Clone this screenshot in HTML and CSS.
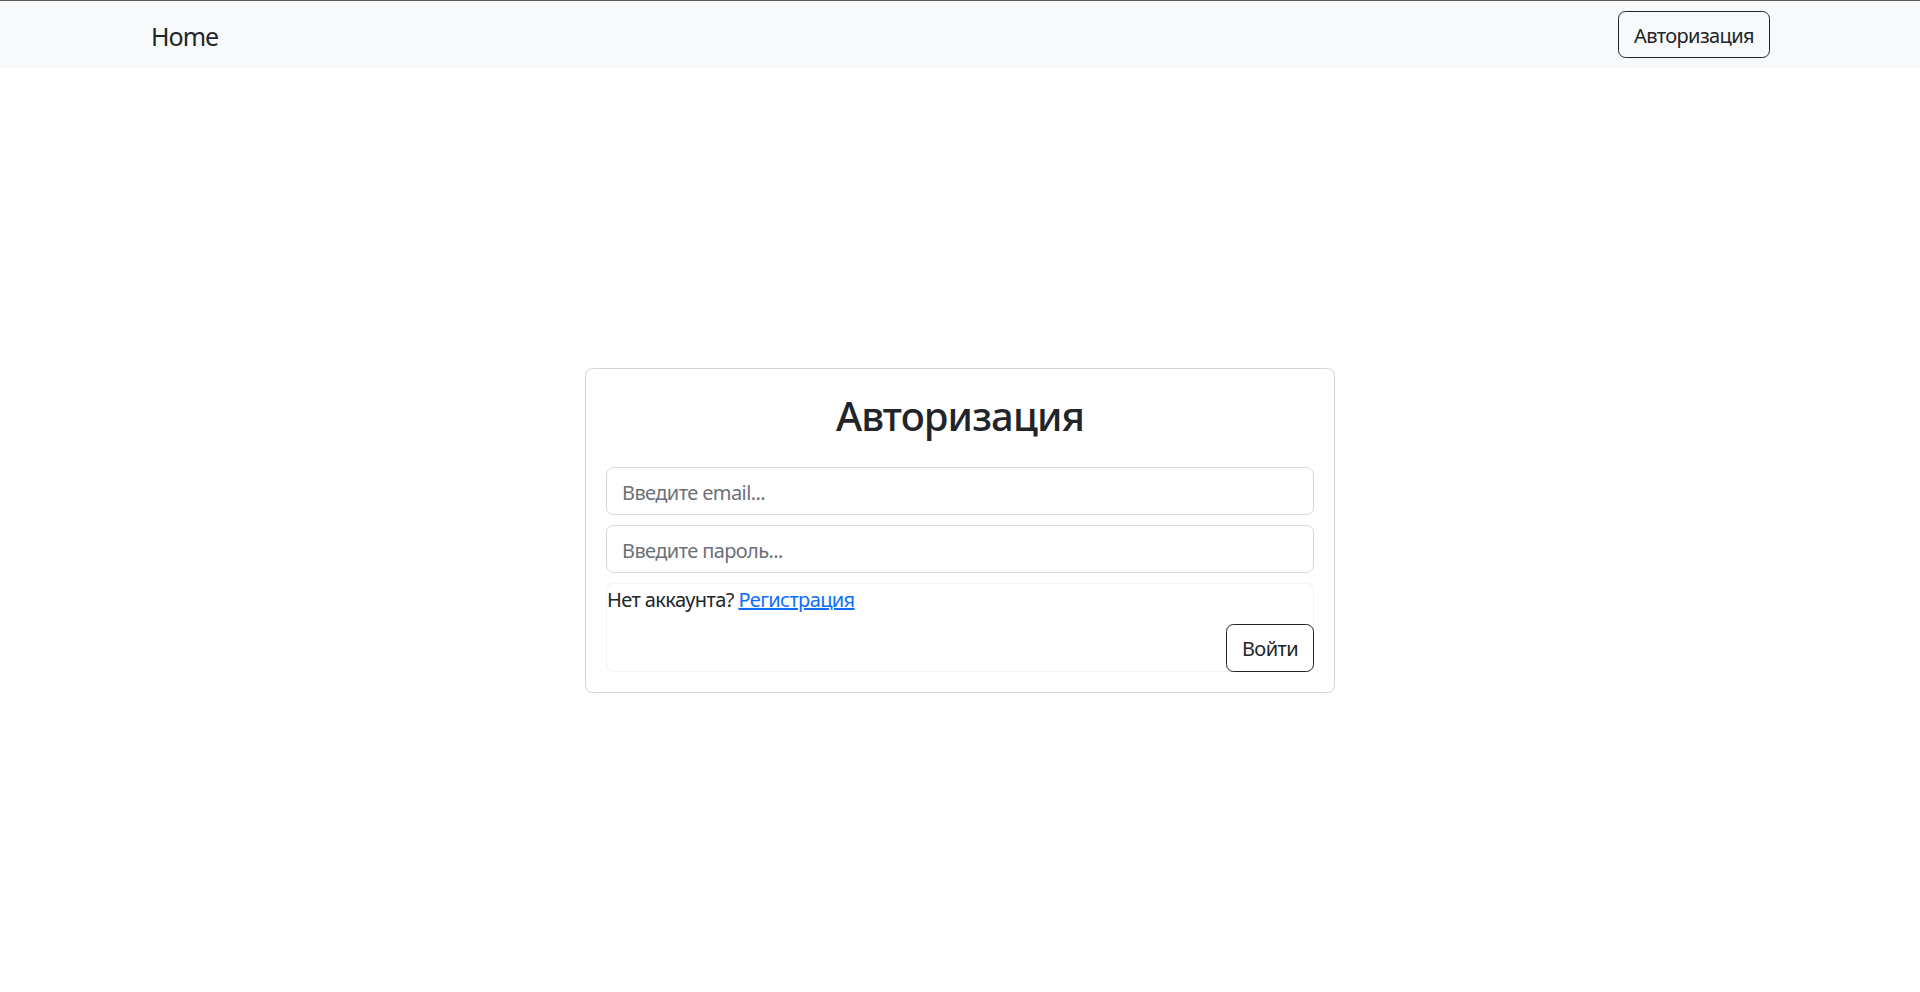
FILE: index.html
```html
<!DOCTYPE html>
<html lang="ru">
<head>
<meta charset="utf-8">
<title>Авторизация</title>
<link rel="stylesheet" href="styles.css">
</head>
<body>
<nav class="navbar">
  <div class="nav-container">
    <a class="brand" href="#">Home</a>
    <button class="btn btn-outline">Авторизация</button>
  </div>
</nav>
<main class="page">
  <div class="card">
    <h2 class="card-title">Авторизация</h2>
    <form class="form">
      <input class="form-control first" type="email" placeholder="Введите email...">
      <input class="form-control" type="password" placeholder="Введите пароль...">
      <div class="form-footer">
        <div class="hint">Нет аккаунта? <a class="link" href="#">Регистрация</a></div>
        <div class="actions"><button type="button" class="btn btn-outline">Войти</button></div>
      </div>
    </form>
  </div>
</main>
</body>
</html>
```

FILE: styles.css
```css
* { box-sizing: border-box; }
html, body { margin: 0; padding: 0; }
body {
  font-family: "Noto Sans", "Open Sans", "Liberation Sans", sans-serif;
  font-size: 20px;
  line-height: 1.5;
  letter-spacing: -0.6px;
  color: #212529;
  background: #fff;
  border-top: 1px solid #5a5a5a;
  height: 992px;
  display: flex;
  flex-direction: column;
}
.navbar {
  background: #f8f9fa;
  height: 67px;
  flex: none;
}
.nav-container {
  height: 100%;
  padding: 0 150px 0 150px;
  display: flex;
  align-items: center;
  justify-content: space-between;
}
.brand {
  font-size: 25px;
  line-height: 37px;
  letter-spacing: -1px;
  color: #212529;
  text-decoration: none;
  margin-left: 1px;
  margin-top: 3px;
}
.btn {
  font-family: inherit;
  font-size: 20px;
  line-height: 30px;
  letter-spacing: -0.6px;
  padding: 9px 15px 7px;
  border-radius: 7.5px;
  background: transparent;
  color: #212529;
  border: 1px solid #212529;
  cursor: pointer;
}
.navbar .btn { padding-top: 8.5px; padding-bottom: 6.5px; }
.page {
  flex: 1;
  display: flex;
  align-items: center;
  justify-content: center;
}
.card {
  width: 750px;
  border: 1px solid #d3d4d5;
  border-radius: 7.5px;
  padding: 20px;
  margin-top: 1px;
}
.card-title {
  margin: 0 0 10px 0;
  padding-top: 3px;
  height: 48px;
  text-align: center;
  font-size: 40px;
  line-height: 48px;
  font-weight: 500;
  letter-spacing: -0.9px;
}
.form { display: flex; flex-direction: column; }
.form-control {
  display: block;
  width: 100%;
  font-family: inherit;
  font-size: 20px;
  line-height: 30px;
  letter-spacing: -0.6px;
  padding: 9.5px 15px 6.5px;
  border: 1px solid #d3d6da;
  border-radius: 7.5px;
  color: #212529;
  background: #fff;
  margin-top: 10px;
}
.form-control.first { margin-top: 20px; }
.form-control::placeholder { color: #6c7178; }
.form-footer {
  margin-top: 10px;
  border: 1px solid #f4f4f5;
  border-radius: 7.5px;
  display: flex;
  flex-direction: column;
}
.hint { line-height: 30px; margin-top: 1px; margin-bottom: -1px; margin-left: 0; }
.link { color: #0d6efd; }
.actions {
  display: flex;
  justify-content: flex-end;
  margin-top: 10px;
  margin-right: -1px;
  margin-bottom: -1px;
}
```
